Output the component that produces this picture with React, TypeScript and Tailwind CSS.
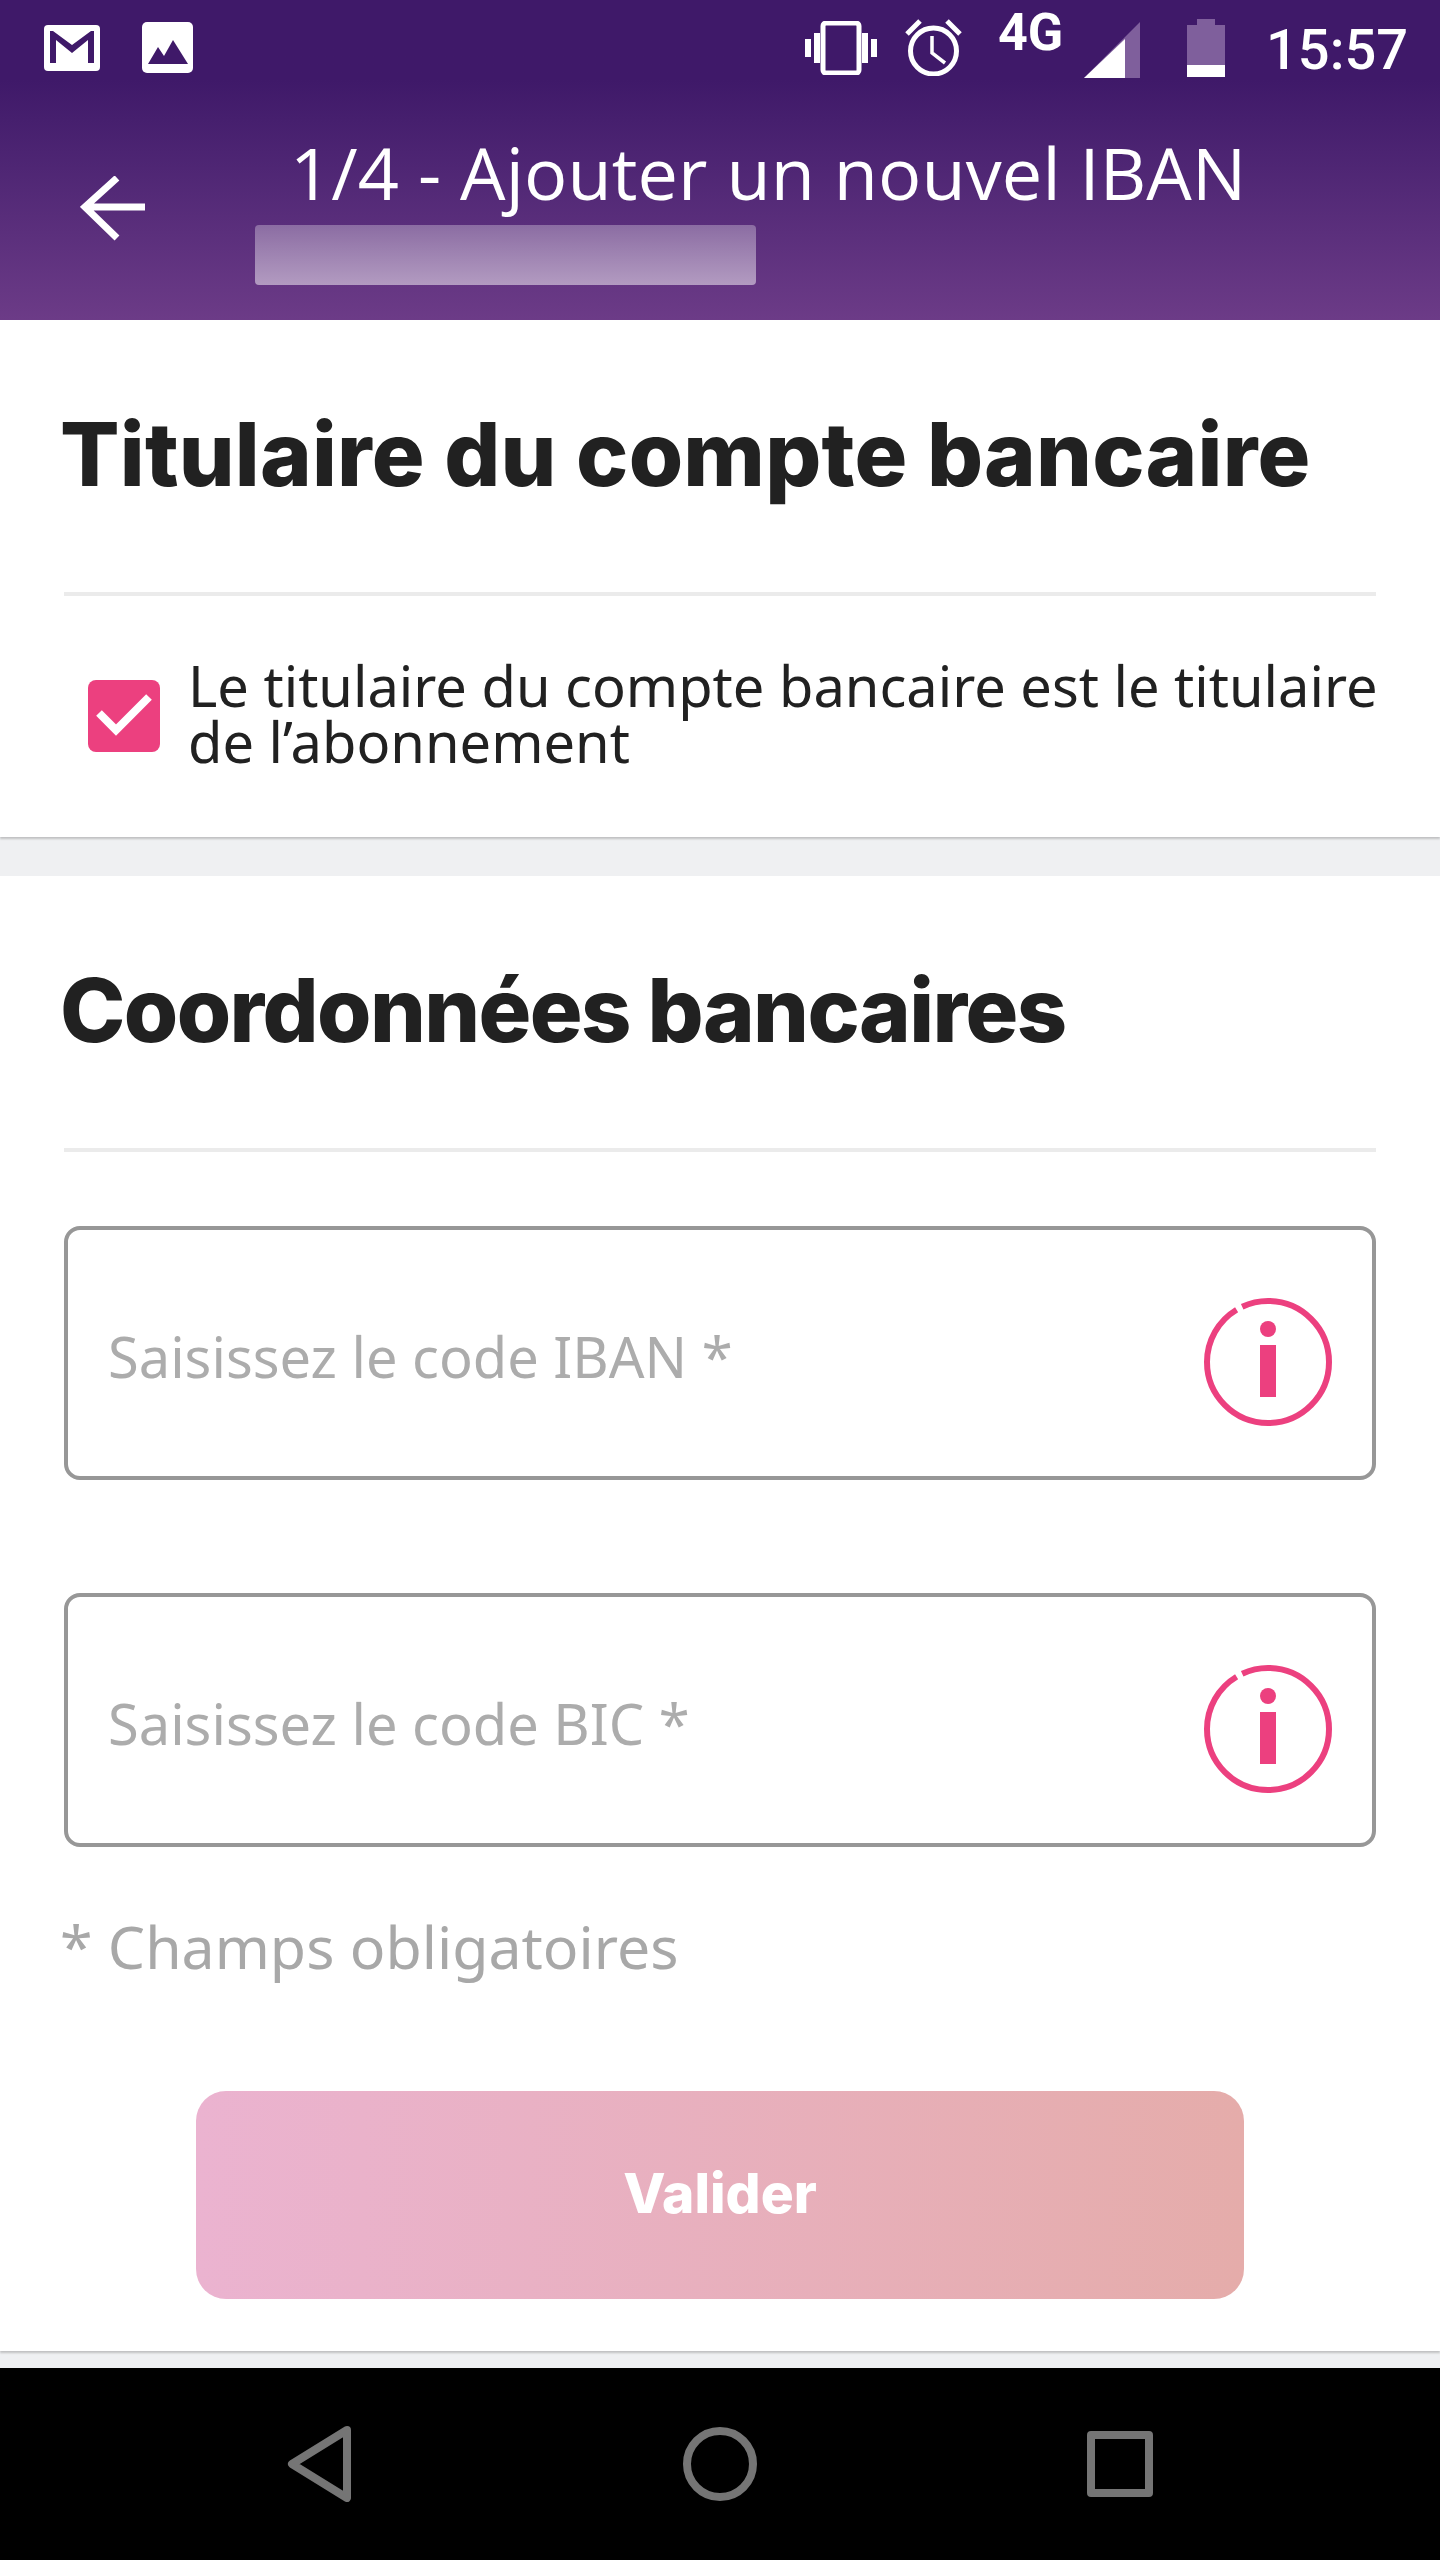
const Info = () => (
  <svg width="128" height="128" viewBox="0 0 128 128" className="shrink-0">
    <circle cx="64" cy="64" r="61" fill="none" stroke="#ec407f" strokeWidth="6" strokeDasharray="377 6.3" strokeDashoffset="-356" transform="rotate(-90 64 64)" />
    <circle cx="64" cy="31" r="8" fill="#ec407f" />
    <rect x="56" y="47" width="16" height="52" fill="#ec407f" />
  </svg>
);

const Field = ({ label, className }: { label: string; className: string }) => (
  <div className={`flex h-[254px] w-[1312px] items-center justify-between rounded-[16px] border-4 border-[#979797] bg-white pl-[40px] pr-[40px] pt-[18px] ${className}`}>
    <span className="mb-[12px] text-[56px] leading-none text-[#acacac] font-['Noto_Sans',sans-serif]">{label}</span>
    <Info />
  </div>
);

export default function App() {
  return (
    <div className="flex h-[2560px] w-[1440px] flex-col overflow-hidden bg-[#eff0f2]">
      <header className="h-[320px] shrink-0 bg-linear-to-b from-[#3f1969] from-25% to-[#6c3b87] text-white">
        <div className="flex h-[96px] items-start">
          <svg width="56" height="46" viewBox="0 0 56 46" className="ml-[44px] mt-[25px]">
            <rect width="56" height="46" rx="4" fill="#fff" />
            <path d="M6 38V6h3l19 14L47 6h3v32h-6V15L28 28 12 15v23z" fill="#3f1969" />
          </svg>
          <svg width="51" height="51" viewBox="0 0 51 51" className="ml-[42px] mt-[22px]">
            <rect width="51" height="51" rx="5" fill="#fff" />
            <path d="M6 42l10-17 6 9 9-16 15 24z" fill="#3f1969" />
          </svg>
          <svg width="72" height="54" viewBox="0 0 72 54" className="ml-[612px] mt-[21px]">
            <rect x="18" y="2" width="36" height="50" rx="3" fill="none" stroke="#fff" strokeWidth="5" />
            <path d="M0 18h6v18H0zM9 12h6v30H9zM57 12h6v30h-6zM66 18h6v18h-6z" fill="#fff" />
          </svg>
          <svg width="57" height="57" viewBox="0 0 57 57" className="ml-[28px] mt-[19px]" fill="none" stroke="#fff">
            <circle cx="28.5" cy="32" r="23" strokeWidth="5" />
            <path d="M27 17v17l13 10" strokeWidth="3.5" />
            <path d="M15 2L2 15M42 2l13 13" strokeWidth="5" />
          </svg>
          <span className="ml-[36px] mt-[8px] w-[64px] text-[52px] font-bold leading-[50px] whitespace-nowrap font-['Roboto',sans-serif]">4G</span>
          <svg width="56" height="56" viewBox="0 0 56 56" className="ml-[22px] mt-[22px]">
            <path d="M56 0v56H0z" fill="#7f5f9c" />
            <path d="M41 17v39H0z" fill="#fff" />
          </svg>
          <svg width="38" height="58" viewBox="0 0 38 58" className="ml-[47px] mt-[19px]">
            <path d="M10 0h18v6h10v52H0V6h10z" fill="#7f5f9c" />
            <rect y="46" width="38" height="12" fill="#fff" />
          </svg>
          <span className="ml-[41px] mt-[20px] text-[56px] font-medium leading-[60px] font-['Roboto',sans-serif]">15:57</span>
        </div>
        <div className="flex items-start">
          <svg width="66" height="66" viewBox="0 0 66 66" className="ml-[80px] mt-[80px] shrink-0" fill="none" stroke="#fff" strokeWidth="7">
            <path d="M65 31H6M37 2L5 31l32 31" />
          </svg>
          <div className="ml-[144px]">
            <div className="mt-[31px] text-[72px] leading-[90px] font-normal tracking-[0.12px] whitespace-nowrap font-['Open_Sans',sans-serif]">1/4 - Ajouter un nouvel IBAN</div>
            <div className="ml-[-35px] mt-[8px] h-[60px] w-[501px] rounded-[4px] bg-linear-to-b from-white/30 to-white/50" />
          </div>
        </div>
      </header>

      <section className="h-[517px] shrink-0 bg-white shadow-[0_2px_2px_rgba(0,0,0,0.2)]">
        <h1 className="pl-[60px] pt-[89px] text-[88px] font-extrabold leading-[90px] tracking-[0.2px] text-[#212121] whitespace-nowrap font-['Inter',sans-serif]">Titulaire du compte bancaire</h1>
        <div className="ml-[64px] mt-[93px] h-[4px] w-[1312px] bg-[#ebebeb]" />
        <div className="ml-[88px] mt-[61px] flex items-center">
          <div className="mt-[6px] flex h-[72px] w-[72px] shrink-0 items-center justify-center rounded-[8px] bg-[#ec407f]">
            <svg width="56" height="42" viewBox="0 0 56 42" fill="none" stroke="#fff" strokeWidth="8" className="mb-[2px]">
              <path d="M3 19l17 17L53 3" />
            </svg>
          </div>
          <p className="ml-[28px] whitespace-nowrap text-[56px] leading-[56px] text-[#212121] font-['Noto_Sans',sans-serif]">Le titulaire du compte bancaire est le titulaire<br />de l’abonnement</p>
        </div>
      </section>

      <section className="mt-[39px] h-[1475px] shrink-0 bg-white shadow-[0_2px_2px_rgba(0,0,0,0.2)]">
        <h2 className="pl-[60px] pt-[89px] text-[88px] font-extrabold leading-[90px] tracking-[-1.6px] text-[#212121] whitespace-nowrap font-['Inter',sans-serif]">Coordonnées bancaires</h2>
        <div className="ml-[64px] mt-[93px] h-[4px] w-[1312px] bg-[#ebebeb]" />
        <Field label="Saisissez le code IBAN *" className="ml-[64px] mt-[74px]" />
        <Field label="Saisissez le code BIC *" className="ml-[64px] mt-[113px]" />
        <p className="ml-[60px] mt-[64px] text-[59px] leading-[70px] text-[#a8a8a8] font-['Noto_Sans',sans-serif]">* Champs obligatoires</p>
        <button className="ml-[196px] mt-[110px] flex h-[208px] w-[1048px] items-center justify-center rounded-[30px] bg-linear-to-r from-[#ebb3d0] to-[#e5acaa] pb-[4px] text-[55px] font-extrabold text-white font-['Inter',sans-serif]">Valider</button>
      </section>

      <nav className="mt-auto flex h-[192px] shrink-0 items-start bg-black">
        <svg width="66" height="76" viewBox="0 0 66 76" className="ml-[287px] mt-[58px]" fill="none" stroke="#757575" strokeWidth="8" strokeLinejoin="round">
          <path d="M60 4L5 38l55 34z" />
        </svg>
        <svg width="76" height="76" viewBox="0 0 76 76" className="ml-[329px] mt-[58px]" fill="none" stroke="#757575" strokeWidth="8">
          <circle cx="38" cy="38" r="33" />
        </svg>
        <svg width="66" height="66" viewBox="0 0 66 66" className="ml-[329px] mt-[63px]" fill="none" stroke="#757575" strokeWidth="8" strokeLinejoin="round">
          <rect x="4" y="4" width="58" height="58" />
        </svg>
      </nav>
    </div>
  );
}
